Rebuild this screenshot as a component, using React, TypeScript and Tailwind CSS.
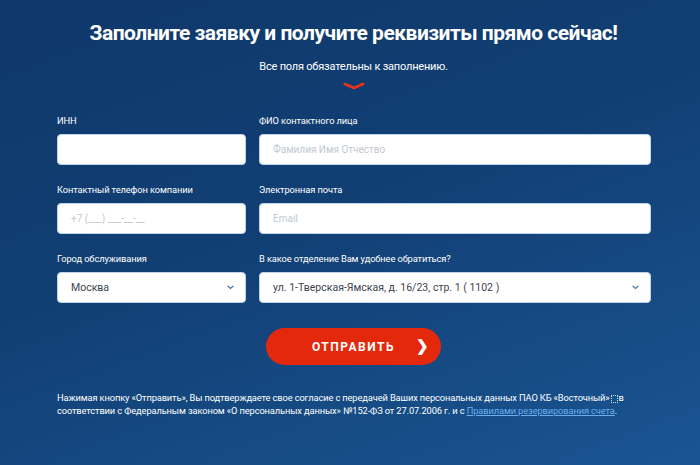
import type { FC } from 'react';

const font = { fontFamily: 'Roboto, "Noto Sans", sans-serif' };

const Label: FC<{ text: string }> = ({ text }) => (
  <div className="text-[9.3px] leading-[12px] text-white mb-[7px] tracking-[-0.1px]">{text}</div>
);

const Field: FC<{ placeholder?: string }> = ({ placeholder }) => (
  <div className="h-[31px] rounded-[4px] bg-white border border-[#bcd4ee] flex items-center px-[13px] text-[10px] text-[#c2c8d0]">
    {placeholder}
  </div>
);

const Select: FC<{ value: string }> = ({ value }) => (
  <div className="h-[31px] rounded-[4px] bg-white border border-[#bcd4ee] flex items-center justify-between pl-[13px] pr-[11px] text-[10.5px] text-[#3b4350]">
    <span>{value}</span>
    <svg width="7" height="5" viewBox="0 0 7 5" fill="none">
      <path d="M1 1.2l2.5 2.2L6 1.2" stroke="#4a78b0" strokeWidth="1.3" strokeLinecap="round" />
    </svg>
  </div>
);

const App: FC = () => {
  return (
    <div
      className="w-[700px] h-[465px] overflow-hidden bg-[linear-gradient(160deg,#0f386b_0%,#113f74_45%,#1a5592_100%)] text-white"
      style={font}
    >
      <div className="pt-[18px] pl-[7px] flex flex-col items-center">
        <h1 className="text-[21px] leading-[30px] font-bold tracking-[-0.5px]">
          Заполните заявку и получите реквизиты прямо сейчас!
        </h1>
        <p className="mt-[12px] text-[11px] leading-[14px] tracking-[-0.2px]">Все поля обязательны к заполнению.</p>
        <svg className="mt-[8px]" width="22" height="8" viewBox="0 0 22 8" fill="none">
          <path d="M2 2l9 4 9-4" stroke="#e8321a" strokeWidth="3" strokeLinecap="round" strokeLinejoin="round" />
        </svg>
      </div>

      <div className="ml-[57px] w-[594px] mt-[25px] grid grid-cols-[189px_1fr] gap-x-[13px] gap-y-[19px]">
        <div>
          <Label text="ИНН" />
          <Field />
        </div>
        <div>
          <Label text="ФИО контактного лица" />
          <Field placeholder="Фамилия Имя Отчество" />
        </div>
        <div>
          <Label text="Контактный телефон компании" />
          <Field placeholder="+7 (___) ___-__-__" />
        </div>
        <div>
          <Label text="Электронная почта" />
          <Field placeholder="Email" />
        </div>
        <div>
          <Label text="Город обслуживания" />
          <Select value="Москва" />
        </div>
        <div>
          <Label text="В какое отделение Вам удобнее обратиться?" />
          <Select value="ул. 1-Тверская-Ямская, д. 16/23, стр. 1 ( 1102 )" />
        </div>
      </div>

      <div className="flex justify-center mt-[25px] pl-[7px]">
        <button
          type="button"
          className="w-[175px] h-[37px] rounded-full bg-[#e4280c] flex items-center justify-center relative text-[12px] font-bold tracking-[1.5px] text-white"
        >
          ОТПРАВИТЬ
          <span className="absolute right-[11px] top-[8px] text-[15px] leading-[20px] font-bold">❯</span>
        </button>
      </div>

      <div className="ml-[57px] mt-[26px] w-[580px] text-[9.3px] leading-[13px] text-white tracking-[-0.12px]">
        Нажимая кнопку «Отправить», Вы подтверждаете свое согласие с передачей Ваших персональных данных ПАО КБ «Восточный»
        <span className="inline-block w-[7px] h-[8px] border border-dotted border-white/80 align-middle mx-[1px]" />
        в соответствии с Федеральным законом «О персональных данных» №152-ФЗ от 27.07.2006 г. и с{' '}
        <a className="text-[#6aaef0] underline">Правилами резервирования счета</a>.
      </div>
    </div>
  );
};

export default App;
